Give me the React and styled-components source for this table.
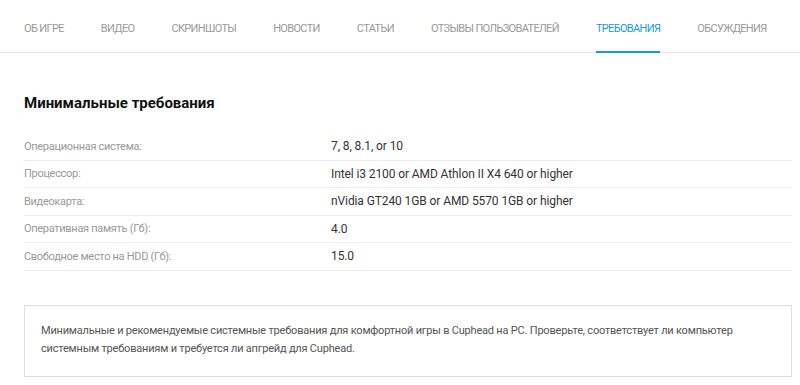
import React from 'react';
import styled, { createGlobalStyle } from 'styled-components';

const Global = createGlobalStyle`
  body {
    margin: 0;
    background: #fff;
    font-family: Roboto, "Liberation Sans", sans-serif;
  }
`

const Nav = styled.nav`
  display: flex;
  gap: 37px;
  height: 52px;
  padding-left: 24px;
  border-bottom: 1px solid #e6e6e6;
`

const Tab = styled.a`
  display: flex;
  align-items: center;
  padding-top: 4px;
  font-size: 11px;
  letter-spacing: -0.66px;
  text-transform: uppercase;
  color: ${p => (p.active ? '#1a9ad6' : '#999')};
  box-shadow: ${p => (p.active ? 'inset 0 -2px 0 #1a9ad6' : 'none')};
  margin-bottom: -1px;
  white-space: nowrap;
`

const Content = styled.div`
  padding: 40px 8px 0 24px;
`

const Heading = styled.h2`
  margin: 0 0 20px;
  font-size: 15px;
  line-height: 20px;
  font-weight: 700;
  color: #111;
`

const Table = styled.div`
  display: flex;
  flex-direction: column;
`

const Row = styled.div`
  display: grid;
  grid-template-columns: 307px 1fr;
  align-items: center;
  height: 26.5px;
  border-bottom: 1px solid #ededed;
`

const Label = styled.span`
  font-size: 11px;
  letter-spacing: -0.3px;
  color: #999;
`

const Value = styled.span`
  font-size: 12px;
  letter-spacing: -0.1px;
  color: #333;
`

const Note = styled.div`
  margin-top: 34px;
  padding: 16px 16px 18px;
  border: 1px solid #ddd;
  font-size: 11px;
  letter-spacing: -0.2px;
  line-height: 18px;
  color: #555;
`

const tabs = ['Об игре', 'Видео', 'Скриншоты', 'Новости', 'Статьи', 'Отзывы пользователей', 'Требования', 'Обсуждения']

const specs = [
  ['Операционная система:', '7, 8, 8.1, or 10'],
  ['Процессор:', 'Intel i3 2100 or AMD Athlon II X4 640 or higher'],
  ['Видеокарта:', 'nVidia GT240 1GB or AMD 5570 1GB or higher'],
  ['Оперативная память (Гб):', '4.0'],
  ['Свободное место на HDD (Гб):', '15.0'],
]

const App = () => (
  <>
    <Global />
    <Nav>
      {tabs.map(t => (
        <Tab key={t} active={t === 'Требования'}>{t}</Tab>
      ))}
    </Nav>
    <Content>
      <Heading>Минимальные требования</Heading>
      <Table>
        {specs.map(([label, value]) => (
          <Row key={label}>
            <Label>{label}</Label>
            <Value>{value}</Value>
          </Row>
        ))}
      </Table>
      <Note>
        Минимальные и рекомендуемые системные требования для комфортной игры в Cuphead на PC. Проверьте, соответствует ли компьютер
        системным требованиям и требуется ли апгрейд для Cuphead.
      </Note>
    </Content>
  </>
)

export default App;
